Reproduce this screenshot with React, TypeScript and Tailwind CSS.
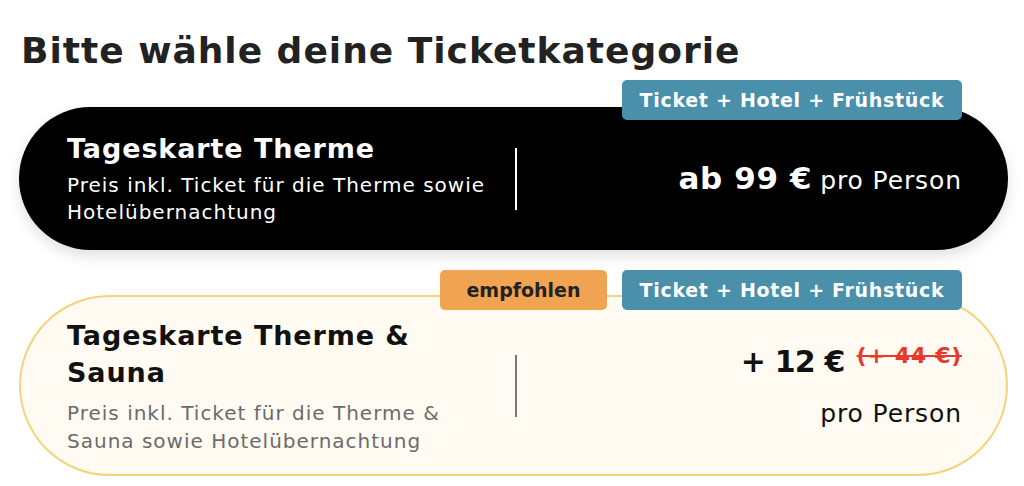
import React from "react";

const font = { fontFamily: "'DejaVu Sans', Inter, sans-serif" };

function Badge({ children, className }: { children: React.ReactNode; className: string }) {
  return (
    <div
      className={`h-[40px] rounded-[5px] flex items-center justify-center text-[19px] font-semibold ${className}`}
    >
      {children}
    </div>
  );
}

export default function App() {
  return (
    <div className="w-[1024px] h-[486px] bg-white overflow-hidden pl-[19px]" style={font}>
      <h1 className="pt-[29px] pl-[2px] text-[36px] leading-[44px] font-semibold text-[#222222] tracking-[1px]">
        Bitte wähle deine Ticketkategorie
      </h1>

      <div className="relative mt-[34px] w-[989px]">
        <div className="absolute right-[46px] top-[-27px] z-10">
          <Badge className="w-[340px] bg-[#4a90ab] text-white tracking-[0.7px]">Ticket + Hotel + Frühstück</Badge>
        </div>
        <div className="h-[143px] rounded-full bg-black flex items-center pl-[48px] pr-[46px] shadow-[0_6px_14px_rgba(0,0,0,0.12)]">
          <div className="w-[428px] text-white">
            <div className="text-[27px] leading-[36px] font-semibold whitespace-nowrap tracking-[0.9px]">Tageskarte Therme</div>
            <div className="mt-[5px] text-[20px] leading-[27px] tracking-[1px]">
              Preis inkl. Ticket für die Therme sowie Hotelübernachtung
            </div>
          </div>
          <div className="ml-[20px] w-[2px] h-[62px] bg-white" />
          <div className="flex-1 flex items-baseline justify-end text-white">
            <span className="text-[31px] font-bold tracking-[0.6px]">ab 99 €</span>
            <span className="ml-[8px] text-[25px] tracking-[0.9px]">pro Person</span>
          </div>
        </div>
      </div>

      <div className="relative mt-[45px] w-[989px]">
        <div className="absolute right-[46px] top-[-25px] z-10 flex gap-[15px]">
          <Badge className="w-[167px] bg-[#f0a452] text-[#222222]">empfohlen</Badge>
          <Badge className="w-[340px] bg-[#4a90ab] text-white tracking-[0.7px]">Ticket + Hotel + Frühstück</Badge>
        </div>
        <div className="h-[181px] rounded-full bg-[#fffbf3] border-2 border-[#f3d47c] flex items-center pl-[46px] pr-[44px]">
          <div className="w-[428px]">
            <div className="text-[27px] leading-[37px] font-semibold text-[#111111] tracking-[0.9px]">
              Tageskarte Therme &amp; Sauna
            </div>
            <div className="mt-[8px] text-[20px] leading-[28px] text-[#6b6b6b] tracking-[1px]">
              Preis inkl. Ticket für die Therme &amp; Sauna sowie Hotelübernachtung
            </div>
          </div>
          <div className="ml-[20px] w-[2px] h-[62px] bg-[#777777]" />
          <div className="flex-1 flex flex-col items-end">
            <div className="flex items-baseline leading-[40px]">
              <span className="text-[30px] font-bold text-[#111111] tracking-[-0.8px]">+ 12 €</span>
              <span className="ml-[12px] text-[22px] font-semibold text-[#e53b2c] line-through relative top-[-9px] tracking-[0.7px]">
                (+ 44 €)
              </span>
            </div>
            <div className="mt-[13px] leading-[32px] text-[25px] text-[#111111] tracking-[0.9px]">pro Person</div>
          </div>
        </div>
      </div>
    </div>
  );
}
